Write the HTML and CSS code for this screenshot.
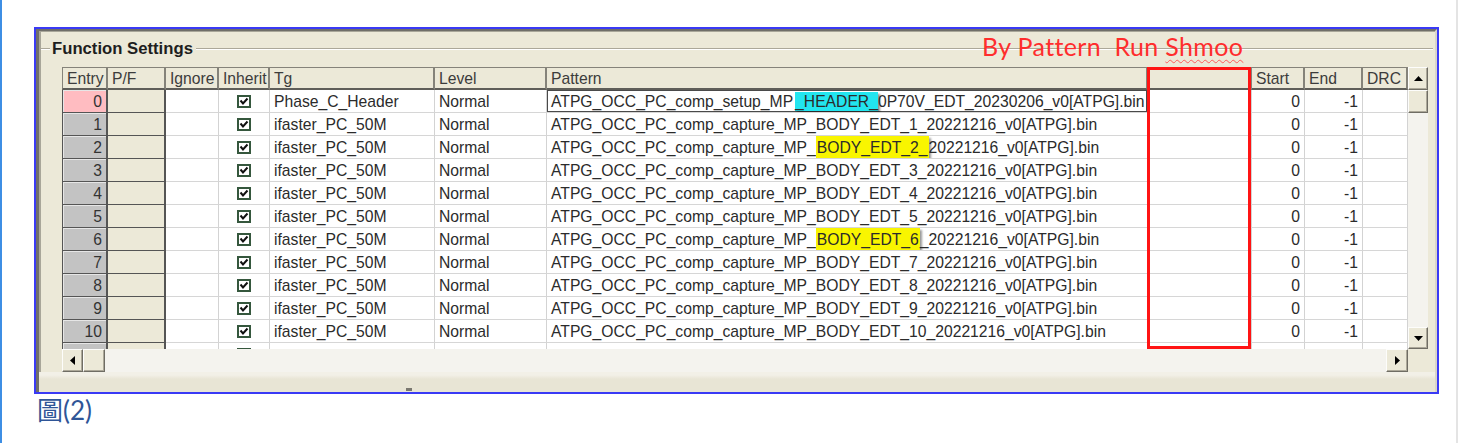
FILE: index.html
```html
<!DOCTYPE html>
<html>
<head>
<meta charset="utf-8">
<link rel="stylesheet" href="styles.css">
</head>
<body>
<div class="page">
  <div class="frame">
    <div class="inner">
      <div class="group-head">
        <span class="gl short"></span><span class="gtitle">Function Settings</span><span class="gl long"></span>
      </div>
      <div class="annot">By Pattern  Run <span class="squig">Shmoo</span></div>
      <div class="grid-area">
        <div class="table">
          <div class="row head">
            <div class="c">Entry</div><div class="c">P/F</div><div class="c">Ignore</div><div class="c">Inherit</div><div class="c">Tg</div><div class="c">Level</div><div class="c">Pattern</div><div class="c"></div><div class="c">Start</div><div class="c">End</div><div class="c">DRC</div>
          </div>
          <div class="row">
            <div class="c e sel">0</div><div class="c pf"></div><div class="c"></div><div class="c ck"><svg width="14" height="13" viewBox="0 0 14 13"><rect x="1" y="1" width="12" height="11" fill="#fff" stroke="#35573d" stroke-width="2"/><path d="M3.5 5.5 L6 8.5 L10.5 3.5" fill="none" stroke="#111" stroke-width="2"/></svg></div><div class="c">Phase_C_Header</div><div class="c">Normal</div><div class="c focus">ATPG_OCC_PC_comp_setup_MP<span class="hl-c">_HEADER_</span>0P70V_EDT_20230206_v0[ATPG].bin</div><div class="c"></div><div class="c r">0</div><div class="c r">-1</div><div class="c"></div>
          </div>
          <div class="row">
            <div class="c e">1</div><div class="c pf"></div><div class="c"></div><div class="c ck"><svg width="14" height="13" viewBox="0 0 14 13"><rect x="1" y="1" width="12" height="11" fill="#fff" stroke="#35573d" stroke-width="2"/><path d="M3.5 5.5 L6 8.5 L10.5 3.5" fill="none" stroke="#111" stroke-width="2"/></svg></div><div class="c">ifaster_PC_50M</div><div class="c">Normal</div><div class="c">ATPG_OCC_PC_comp_capture_MP_BODY_EDT_1_20221216_v0[ATPG].bin</div><div class="c"></div><div class="c r">0</div><div class="c r">-1</div><div class="c"></div>
          </div>
          <div class="row">
            <div class="c e">2</div><div class="c pf"></div><div class="c"></div><div class="c ck"><svg width="14" height="13" viewBox="0 0 14 13"><rect x="1" y="1" width="12" height="11" fill="#fff" stroke="#35573d" stroke-width="2"/><path d="M3.5 5.5 L6 8.5 L10.5 3.5" fill="none" stroke="#111" stroke-width="2"/></svg></div><div class="c">ifaster_PC_50M</div><div class="c">Normal</div><div class="c">ATPG_OCC_PC_comp_capture_MP_<span class="hl-y">BODY_EDT_2_</span>20221216_v0[ATPG].bin</div><div class="c"></div><div class="c r">0</div><div class="c r">-1</div><div class="c"></div>
          </div>
          <div class="row">
            <div class="c e">3</div><div class="c pf"></div><div class="c"></div><div class="c ck"><svg width="14" height="13" viewBox="0 0 14 13"><rect x="1" y="1" width="12" height="11" fill="#fff" stroke="#35573d" stroke-width="2"/><path d="M3.5 5.5 L6 8.5 L10.5 3.5" fill="none" stroke="#111" stroke-width="2"/></svg></div><div class="c">ifaster_PC_50M</div><div class="c">Normal</div><div class="c">ATPG_OCC_PC_comp_capture_MP_BODY_EDT_3_20221216_v0[ATPG].bin</div><div class="c"></div><div class="c r">0</div><div class="c r">-1</div><div class="c"></div>
          </div>
          <div class="row">
            <div class="c e">4</div><div class="c pf"></div><div class="c"></div><div class="c ck"><svg width="14" height="13" viewBox="0 0 14 13"><rect x="1" y="1" width="12" height="11" fill="#fff" stroke="#35573d" stroke-width="2"/><path d="M3.5 5.5 L6 8.5 L10.5 3.5" fill="none" stroke="#111" stroke-width="2"/></svg></div><div class="c">ifaster_PC_50M</div><div class="c">Normal</div><div class="c">ATPG_OCC_PC_comp_capture_MP_BODY_EDT_4_20221216_v0[ATPG].bin</div><div class="c"></div><div class="c r">0</div><div class="c r">-1</div><div class="c"></div>
          </div>
          <div class="row">
            <div class="c e">5</div><div class="c pf"></div><div class="c"></div><div class="c ck"><svg width="14" height="13" viewBox="0 0 14 13"><rect x="1" y="1" width="12" height="11" fill="#fff" stroke="#35573d" stroke-width="2"/><path d="M3.5 5.5 L6 8.5 L10.5 3.5" fill="none" stroke="#111" stroke-width="2"/></svg></div><div class="c">ifaster_PC_50M</div><div class="c">Normal</div><div class="c">ATPG_OCC_PC_comp_capture_MP_BODY_EDT_5_20221216_v0[ATPG].bin</div><div class="c"></div><div class="c r">0</div><div class="c r">-1</div><div class="c"></div>
          </div>
          <div class="row">
            <div class="c e">6</div><div class="c pf"></div><div class="c"></div><div class="c ck"><svg width="14" height="13" viewBox="0 0 14 13"><rect x="1" y="1" width="12" height="11" fill="#fff" stroke="#35573d" stroke-width="2"/><path d="M3.5 5.5 L6 8.5 L10.5 3.5" fill="none" stroke="#111" stroke-width="2"/></svg></div><div class="c">ifaster_PC_50M</div><div class="c">Normal</div><div class="c">ATPG_OCC_PC_comp_capture_MP_<span class="hl-y">BODY_EDT_6</span>_20221216_v0[ATPG].bin</div><div class="c"></div><div class="c r">0</div><div class="c r">-1</div><div class="c"></div>
          </div>
          <div class="row">
            <div class="c e">7</div><div class="c pf"></div><div class="c"></div><div class="c ck"><svg width="14" height="13" viewBox="0 0 14 13"><rect x="1" y="1" width="12" height="11" fill="#fff" stroke="#35573d" stroke-width="2"/><path d="M3.5 5.5 L6 8.5 L10.5 3.5" fill="none" stroke="#111" stroke-width="2"/></svg></div><div class="c">ifaster_PC_50M</div><div class="c">Normal</div><div class="c">ATPG_OCC_PC_comp_capture_MP_BODY_EDT_7_20221216_v0[ATPG].bin</div><div class="c"></div><div class="c r">0</div><div class="c r">-1</div><div class="c"></div>
          </div>
          <div class="row">
            <div class="c e">8</div><div class="c pf"></div><div class="c"></div><div class="c ck"><svg width="14" height="13" viewBox="0 0 14 13"><rect x="1" y="1" width="12" height="11" fill="#fff" stroke="#35573d" stroke-width="2"/><path d="M3.5 5.5 L6 8.5 L10.5 3.5" fill="none" stroke="#111" stroke-width="2"/></svg></div><div class="c">ifaster_PC_50M</div><div class="c">Normal</div><div class="c">ATPG_OCC_PC_comp_capture_MP_BODY_EDT_8_20221216_v0[ATPG].bin</div><div class="c"></div><div class="c r">0</div><div class="c r">-1</div><div class="c"></div>
          </div>
          <div class="row">
            <div class="c e">9</div><div class="c pf"></div><div class="c"></div><div class="c ck"><svg width="14" height="13" viewBox="0 0 14 13"><rect x="1" y="1" width="12" height="11" fill="#fff" stroke="#35573d" stroke-width="2"/><path d="M3.5 5.5 L6 8.5 L10.5 3.5" fill="none" stroke="#111" stroke-width="2"/></svg></div><div class="c">ifaster_PC_50M</div><div class="c">Normal</div><div class="c">ATPG_OCC_PC_comp_capture_MP_BODY_EDT_9_20221216_v0[ATPG].bin</div><div class="c"></div><div class="c r">0</div><div class="c r">-1</div><div class="c"></div>
          </div>
          <div class="row">
            <div class="c e">10</div><div class="c pf"></div><div class="c"></div><div class="c ck"><svg width="14" height="13" viewBox="0 0 14 13"><rect x="1" y="1" width="12" height="11" fill="#fff" stroke="#35573d" stroke-width="2"/><path d="M3.5 5.5 L6 8.5 L10.5 3.5" fill="none" stroke="#111" stroke-width="2"/></svg></div><div class="c">ifaster_PC_50M</div><div class="c">Normal</div><div class="c">ATPG_OCC_PC_comp_capture_MP_BODY_EDT_10_20221216_v0[ATPG].bin</div><div class="c"></div><div class="c r">0</div><div class="c r">-1</div><div class="c"></div>
          </div>
          <div class="row">
            <div class="c e"></div><div class="c pf"></div><div class="c"></div><div class="c ck"><svg width="14" height="13" viewBox="0 0 14 13"><rect x="1" y="1" width="12" height="11" fill="#fff" stroke="#35573d" stroke-width="2"/></svg></div><div class="c"></div><div class="c"></div><div class="c"></div><div class="c"></div><div class="c r"></div><div class="c r"></div><div class="c"></div>
          </div>
        </div>
        <div class="vscroll">
          <div class="btn up"><svg width="9" height="5" viewBox="0 0 9 5"><polygon points="0,5 9,5 4.5,0" fill="#000"/></svg></div>
          <div class="btn vthumb"></div>
          <div class="track"></div>
          <div class="btn down"><svg width="9" height="5" viewBox="0 0 9 5"><polygon points="0,0 9,0 4.5,5" fill="#000"/></svg></div>
        </div>
        <div class="hscroll">
          <div class="btn left"><svg width="5" height="9" viewBox="0 0 5 9"><polygon points="5,0 5,9 0,4.5" fill="#000"/></svg></div>
          <div class="btn hthumb"></div>
          <div class="track"></div>
          <div class="btn right"><svg width="5" height="9" viewBox="0 0 5 9"><polygon points="0,0 0,9 5,4.5" fill="#000"/></svg></div>
        </div>
        <div class="corner"></div>
        <div class="redbox"></div>
      </div>
      <div class="bottom"><span class="grip"></span></div>
    </div>
  </div>
  <div class="caption">圖(2)</div>
</div>
</body>
</html>
```

FILE: styles.css
```css
* { box-sizing: border-box; }
html, body { margin: 0; padding: 0; background: #fff; }
body { font-family: "Liberation Sans", Arial, sans-serif; }

.page {
  width: 1458px;
  height: 443px;
  border-left: 2px solid #3d8ee4;
  border-right: 2px solid #e4e4e4;
  padding: 27px 0 0 32px;
  overflow: hidden;
}

.frame {
  width: 1405px;
  height: 367px;
  border: 2px solid #3a3af5;
  background: #ece9d8;
}

.inner {
  position: relative;
  height: 100%;
  display: flex;
  flex-direction: column;
  border-top: 2px solid #6f6e69;
  border-left: 3px solid #6f6e69;
  border-right: 2px solid #d9d6c8;
  box-shadow: inset 2px 1px 0 #a8a699;
}

.group-head {
  flex: none;
  height: 36px;
  display: flex;
  align-items: center;
  padding: 0 2px;
}
.gl {
  height: 2px;
  border-top: 1px solid #aca899;
  border-bottom: 1px solid #fff;
}
.gl.short { width: 9px; }
.gl.long { flex: 1; }
.gtitle {
  font-weight: bold;
  font-size: 16.7px;
  line-height: 20px;
  color: #1e1e1e;
  padding: 0 3px 0 2px;
}

.annot {
  position: absolute;
  left: 943px;
  top: 1px;
  font-family: "Lato", "Liberation Sans", sans-serif;
  font-size: 25px;
  letter-spacing: 0.35px;
  line-height: 28px;
  color: #ff2d2d;
  white-space: pre;
}
.squig {
  text-decoration: underline wavy #ff5a5a;
  text-decoration-thickness: 1px;
  text-underline-offset: 3px;
}

.grid-area {
  position: relative;
  flex: none;
  margin-left: 23px;
  width: 1366px;
  height: 305px;
  display: grid;
  grid-template-columns: 1346px 20px;
  grid-template-rows: 282px 23px;
}

.table {
  overflow: hidden;
  background: #fff;
}
.row {
  display: grid;
  grid-template-columns: 46px 58px 53px 51px 165px 112px 601px 104px 53px 58px 45px;
  height: 23px;
}
.c {
  border-right: 1px solid #d3d3d3;
  border-bottom: 1px solid #d6d6d6;
  padding: 0 4px;
  font-size: 15.7px;
  line-height: 23px;
  color: #2b2b2b;
  white-space: nowrap;
  overflow: hidden;
}
.head .c {
  background: #ece9d8;
  border-top: 1px solid #85837a;
  border-right: 2px solid #85837a;
  border-bottom: 2px solid #5f5e59;
  line-height: 21px;
  color: #3c3c3c;
}
.head .c:first-child { border-left: 1px solid #85837a; }

.e {
  background: #c3c3c3;
  text-align: right;
  padding-right: 4px;
  border-left: 1px solid #555;
  border-right: 2px solid #555;
  border-bottom: 1px solid #555;
  box-shadow: inset 1px 1px 0 #e6e6e6;
  color: #333;
}
.e.sel { background: #ffbcc1; }
.pf {
  background: #ece9d8;
  border-right: 2px solid #555;
  border-bottom: 1px solid #555;
}
.ck {
  display: flex;
  align-items: center;
  justify-content: center;
  padding: 0;
}
.r { text-align: right; }
.focus { box-shadow: inset 0 0 0 1px #4a4a4a; }

.hl-c {
  background: #22e5ef;
  box-shadow: 2px 2px 2px rgba(0, 0, 0, 0.45);
  padding: 1px 0;
  margin-left: 2px;
}
.hl-y {
  background: #f9f500;
  box-shadow: 2px 2px 2px rgba(0, 0, 0, 0.4);
  padding: 3px 1px;
}

.btn {
  flex: none;
  display: flex;
  align-items: center;
  justify-content: center;
  background: #ece9d8;
  border: 1px solid;
  border-color: #fdfdfb #6f6d64 #6f6d64 #fdfdfb;
  box-shadow: inset -1px -1px 0 #aca899;
}
.track { flex: 1; }

.vscroll {
  display: flex;
  flex-direction: column;
  background: #f4f3ee;
}
.vscroll .up, .vscroll .vthumb { height: 23px; }
.vscroll .down { height: 22px; }

.hscroll {
  display: flex;
  background: #f4f3ee;
}
.hscroll .left { width: 21px; }
.hscroll .hthumb { width: 22px; }
.hscroll .right { width: 22px; }

.corner { background: #ece9d8; }

.redbox {
  position: absolute;
  left: 1085px;
  top: 0;
  width: 104px;
  height: 282px;
  border: 3px solid #ff1414;
}

.bottom {
  flex: 1;
  background: linear-gradient(#f2f0e7 0, #f2f0e7 3px, #e8e5d5 7px, #e8e5d5 100%);
}
.grip {
  display: block;
  width: 6px;
  height: 3px;
  margin: 16px 0 0 367px;
  background: #7a7870;
}

.caption {
  font-family: "Lato", "Noto Sans CJK TC", sans-serif;
  font-size: 26px;
  line-height: 32px;
  color: #2f5597;
  margin-left: 3px;
}
```
